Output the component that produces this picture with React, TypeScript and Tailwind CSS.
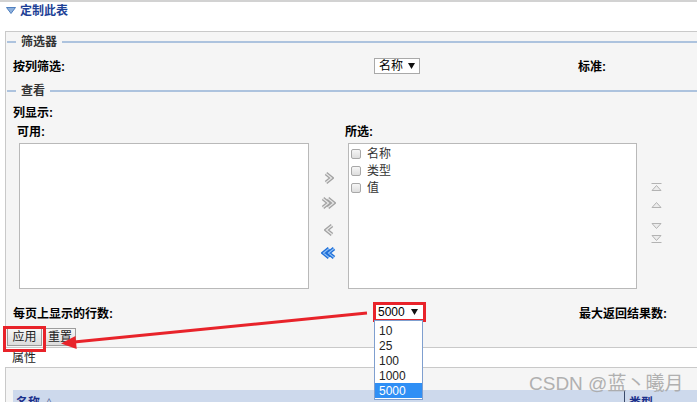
import React from 'react';

// embossed chevron used by the move buttons between the two lists
function Chevron({ dir, double, active }: { dir: 'l' | 'r'; double?: boolean; active?: boolean }) {
  const outer = active ? '#1f6fd8' : '#a3a3a3';
  const inner = active ? '#8fc0f6' : '#e9e9e9';
  const w = double ? 15 : 10;
  const one = (x: number) =>
    dir === 'r' ? `M${x + 2} 1.5 L${x + 7.5} 6 L${x + 2} 10.5` : `M${x + 8} 1.5 L${x + 2.5} 6 L${x + 8} 10.5`;
  const d = double ? `${one(0)} ${one(5)}` : one(0);
  return (
    <svg width={w} height={12} viewBox={`0 0 ${w} 12`}>
      <path d={d} fill="none" stroke={outer} strokeWidth={3.8} strokeLinejoin="miter" />
      <path d={d} fill="none" stroke={inner} strokeWidth={1.2} strokeLinejoin="miter" />
    </svg>
  );
}

function OrderIcon({ kind }: { kind: 'top' | 'up' | 'down' | 'bottom' }) {
  const up = kind === 'top' || kind === 'up';
  const tri = up ? '5.5,3.5 1,8.5 10,8.5' : '1,3.5 10,3.5 5.5,8.5';
  return (
    <svg width={11} height={12} viewBox="0 0 11 12">
      {kind === 'top' && <line x1={0.5} y1={1.5} x2={10.5} y2={1.5} stroke="#b3b3b3" strokeWidth={1} />}
      <polygon points={tri} fill="#ececec" stroke="#b3b3b3" strokeWidth={1} />
      {kind === 'bottom' && <line x1={0.5} y1={10.5} x2={10.5} y2={10.5} stroke="#b3b3b3" strokeWidth={1} />}
    </svg>
  );
}

function Caret() {
  return (
    <svg width={7} height={6} viewBox="0 0 7 6">
      <polygon points="0,0 7,0 3.5,6" fill="#111" />
    </svg>
  );
}

function Legend({ label, h }: { label: string; h: string }) {
  return (
    <div className={`flex items-center ${h}`}>
      <div className="ml-[1px] w-[9px] h-[2px] bg-[#adc3de]" />
      <span className="px-[5px] text-[12px] leading-[14px] font-bold text-[#333]">{label}</span>
      <div className="flex-1 h-[2px] bg-[#adc3de]" />
    </div>
  );
}

function CheckItem({ label }: { label: string }) {
  return (
    <div className="flex items-center h-[17px] pl-[2px] gap-[6px]">
      <span className="w-[10px] h-[10px] rounded-[2px] border border-[#a8a8a8] bg-gradient-to-b from-[#f6f6f6] to-[#dedede]" />
      <span className="text-[12px] leading-[14px] text-[#333]">{label}</span>
    </div>
  );
}

const OPTIONS = ['10', '25', '100', '1000', '5000'];

export default function App() {
  return (
    <div className="relative w-[697px] h-[402px] overflow-hidden bg-white border-t-2 border-[#d2d2d2] font-['Liberation_Sans','Noto_Sans_CJK_SC',sans-serif] text-[12px] text-black">
      {/* section header */}
      <div className="flex items-center h-[17px] pl-[6px] gap-[4px]">
        <svg width={10} height={7} viewBox="0 0 10 7">
          <polygon points="0.5,0.5 9.5,0.5 5,6.5" fill="#8db0dc" stroke="#4f7fbf" strokeWidth={1} />
        </svg>
        <span className="font-bold text-[#1d3f96] leading-[14px]">定制此表</span>
      </div>

      {/* main panel */}
      <div className="ml-[5px] mt-[12px] w-[720px] border border-[#c9c9c9] bg-[#f5f5f5]">
        <Legend label="筛选器" h="h-[20px]" />
        <div className="grid grid-cols-[368px_204px_1fr] items-center h-[30px]">
          <span className="pl-[7px] font-bold leading-[14px]">按列筛选:</span>
          <div className="flex items-center justify-between w-[46px] h-[16px] -mt-[3px] pl-[4px] pr-[4px] border border-[#a9a9a9] bg-white">
            <span className="leading-[14px]">名称</span>
            <Caret />
          </div>
          <span className="font-bold leading-[14px]">标准:</span>
        </div>

        <Legend label="查看" h="h-[18px]" />
        <div className="flex items-center h-[25px] pl-[7px]">
          <span className="font-bold leading-[14px]">列显示:</span>
        </div>
        <div className="flex items-center h-[14px] pl-[11px] font-bold leading-[14px]">
          <span className="w-[328px]">可用:</span>
          <span>所选:</span>
        </div>

        <div className="flex mt-[4px] pl-[13px] h-[146px]">
          <div className="w-[290px] h-full border border-[#b9b9b9] bg-white" />
          <div className="w-[39px] flex flex-col items-center">
            <div className="mt-[29px]"><Chevron dir="r" /></div>
            <div className="mt-[13px]"><Chevron dir="r" double /></div>
            <div className="mt-[15px]"><Chevron dir="l" /></div>
            <div className="mt-[11px]"><Chevron dir="l" double active /></div>
          </div>
          <div className="w-[289px] h-full border border-[#b9b9b9] bg-white pt-[1px]">
            <CheckItem label="名称" />
            <CheckItem label="类型" />
            <CheckItem label="值" />
          </div>
          <div className="ml-[14px] flex flex-col">
            <div className="mt-[39px]"><OrderIcon kind="top" /></div>
            <div className="mt-[5px]"><OrderIcon kind="up" /></div>
            <div className="mt-[9px]"><OrderIcon kind="down" /></div>
            <div><OrderIcon kind="bottom" /></div>
          </div>
        </div>

        <div className="grid grid-cols-[368px_204px_1fr] items-start mt-[18px] h-[14px]">
          <span className="pl-[7px] font-bold leading-[14px]">每页上显示的行数:</span>
          <div className="pl-[2px]">
            <div className="relative -mt-[2px] w-[47px] h-[14px] bg-white flex items-center justify-between pl-[2px] pr-[5px]">
              <span className="leading-[14px]">5000</span>
              <Caret />
              <div className="absolute -left-[3px] -top-[3px] w-[53px] h-[20px] border-[3px] border-[#e8232a]" />
              <div className="absolute -left-[2px] top-[15px] w-[49px] pt-[2px] pb-[1px] border border-[#7f9fcf] bg-white z-10">
                {OPTIONS.map((o) => (
                  <div
                    key={o}
                    className={`h-[15px] pl-[4px] flex items-center leading-[14px] ${o === '5000' ? 'bg-[#2f8ff5] text-white' : 'text-[#222]'}`}
                  >
                    {o}
                  </div>
                ))}
              </div>
            </div>
          </div>
          <span className="pl-[1px] font-bold leading-[14px]">最大返回结果数:</span>
        </div>

        <div className="flex mt-[7px] mb-[1px] pl-[1px] gap-[2px]">
          <div className="relative">
            <button className="w-[35px] h-[18px] border border-[#9c9c9c] bg-gradient-to-b from-[#f7f7f7] to-[#dcdcdc] text-[12px] leading-[14px] text-[#222]">
              应用
            </button>
            <div className="absolute -left-[4px] -top-[2px] w-[43px] h-[26px] border-[3px] border-[#e8232a]" />
          </div>
          <button className="w-[32px] h-[18px] border border-[#9c9c9c] bg-gradient-to-b from-[#f7f7f7] to-[#dcdcdc] text-[12px] leading-[14px] text-[#222]">
            重置
          </button>
        </div>
      </div>

      {/* properties */}
      <div className="flex items-center h-[19px] pl-[12px] bg-white">
        <span className="leading-[14px] text-[#222]">属性</span>
      </div>
      <div className="ml-[5px] border-t border-l border-[#c9c9c9] bg-[#f5f5f5] pt-[22px] h-[60px]">
        <div className="ml-[7px] flex h-[20px] bg-[#cdd9ec] font-bold text-[#1a2f8a] leading-[14px]">
          <div className="w-[611px] pl-[3px] pt-[6px] flex gap-[4px]">
            <span>名称</span>
            <span className="text-[10px] font-normal text-[#5a6e9e]">∧</span>
          </div>
          <div className="border-l border-[#3a4a6a] pl-[4px] pt-[6px]">类型</div>
        </div>
      </div>

      {/* annotation arrow */}
      <svg className="absolute inset-0 pointer-events-none" width={697} height={402} viewBox="0 0 697 402">
        <line x1={367} y1={311} x2={74} y2={340} stroke="#e8232a" strokeWidth={3} />
        <polygon points="61,341.5 75.5,334 76.7,347" fill="#e8232a" />
      </svg>

      {/* watermark */}
      <div className="absolute left-[529px] top-[371px] text-[19px] leading-[22px] text-[#a9a9a9] opacity-90 pointer-events-none">
        CSDN @蓝丶曦月
      </div>
    </div>
  );
}
